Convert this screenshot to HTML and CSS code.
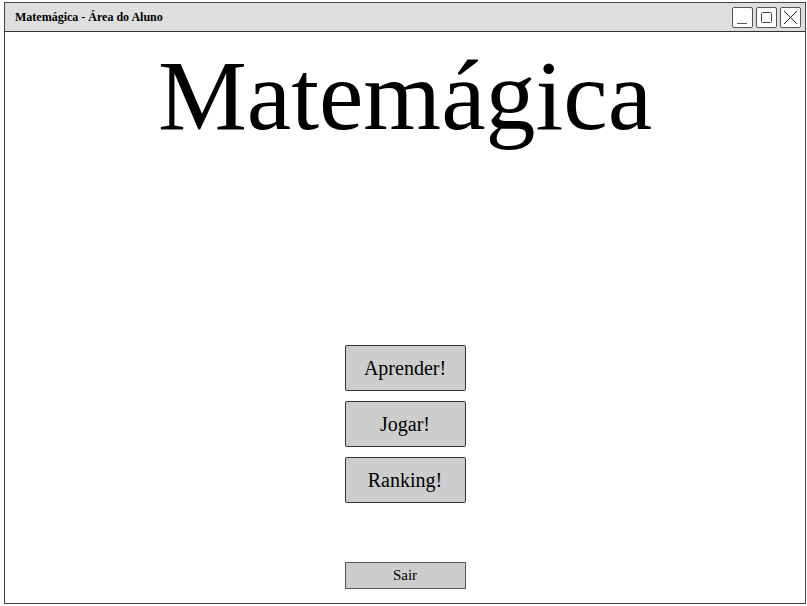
FILE: index.html
```html
<!DOCTYPE html>
<html lang="pt">
<head>
<meta charset="utf-8">
<title>Matemágica - Área do Aluno</title>
<link rel="stylesheet" href="styles.css">
</head>
<body>
<div class="window">
  <div class="titlebar">
    <span class="title">Matemágica - Área do Aluno</span>
    <div class="controls">
      <span class="ctl"><svg width="21" height="21" viewBox="0 0 21 21"><line x1="5" y1="16.5" x2="15" y2="16.5" stroke="#555" stroke-width="1"/></svg></span>
      <span class="ctl"><svg width="21" height="21" viewBox="0 0 21 21"><rect x="5.5" y="5.5" width="10" height="10" rx="1" fill="none" stroke="#444" stroke-width="1"/></svg></span>
      <span class="ctl"><svg width="21" height="21" viewBox="0 0 21 21"><path d="M4 4 L17 17 M17 4 L4 17" stroke="#222" stroke-width="1"/></svg></span>
    </div>
  </div>
  <div class="content">
    <h1 class="brand">Matemágica</h1>
    <div class="menu">
      <button class="btn big">Aprender!</button>
      <button class="btn big">Jogar!</button>
      <button class="btn big">Ranking!</button>
    </div>
    <button class="btn small">Sair</button>
  </div>
</div>
</body>
</html>
```
FILE: styles.css
```css
html, body {
  margin: 0;
  padding: 0;
  background: #fff;
}
body {
  font-family: "Liberation Serif", "Times New Roman", serif;
  padding: 2px 0 0 4px;
}
.window {
  width: 800px;
  height: 600px;
  border: 1px solid #444;
  display: flex;
  flex-direction: column;
  background: #fff;
}
.titlebar {
  height: 28px;
  background: #dedede;
  border-bottom: 1px solid #333;
  display: flex;
  align-items: center;
  justify-content: space-between;
  padding: 0 4px 0 10px;
}
.title {
  font-weight: bold;
  font-size: 12px;
  color: #000;
  padding-top: 1px;
}
.controls {
  display: flex;
  gap: 3px;
}
.ctl {
  width: 21px;
  height: 21px;
  border: 1px solid #555;
  border-radius: 2px;
  box-sizing: border-box;
  background: #fff;
  display: flex;
  overflow: hidden;
}
.ctl svg {
  margin: -1px;
  flex: none;
}
.content {
  flex: 1;
  display: flex;
  flex-direction: column;
  align-items: center;
}
.brand {
  font-weight: normal;
  font-size: 100px;
  line-height: 100px;
  margin: 14px 0 0 0;
  color: #000;
}
.menu {
  margin-top: 199px;
  display: flex;
  flex-direction: column;
  gap: 10px;
}
.btn {
  font-family: "Liberation Serif", "Times New Roman", serif;
  background: #cdcdcd;
  border: 1px solid #333;
  color: #000;
  width: 121px;
  padding: 0;
  box-sizing: border-box;
}
.btn.big {
  height: 46px;
  font-size: 20px;
  border-radius: 2px;
}
.btn.small {
  margin-top: 59px;
  height: 27px;
  font-size: 15px;
  border-color: #555;
}
```
